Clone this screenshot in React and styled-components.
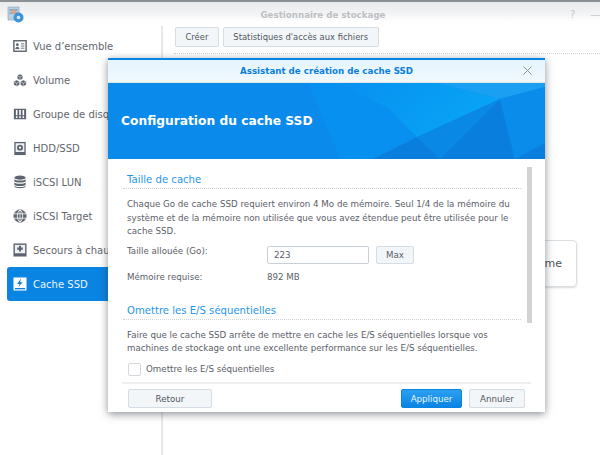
import React from 'react';
import styled, { createGlobalStyle } from 'styled-components';

const Global = createGlobalStyle`
  html, body { margin: 0; padding: 0; background: #fff; }
  body { width: 600px; height: 455px; overflow: hidden; font-family: "DejaVu Sans", sans-serif; }
`;

const OverviewIcon = () => (
  <svg width="16" height="16" viewBox="0 0 16 16">
    <rect x="1" y="2" width="14" height="12" fill="none" stroke="#5b6470" strokeWidth="1.6" />
    <circle cx="5" cy="6.5" r="1.6" fill="#5b6470" />
    <path d="M3 11c0-2 4-2 4 0zM9 5.5h4M9 8h4M9 10.5h4" fill="#5b6470" stroke="#5b6470" />
  </svg>
);
const VolumeIcon = () => (
  <svg width="17" height="17" viewBox="0 0 17 17" fill="#5b6470" stroke="#fff" strokeWidth=".6">
    <path d="M8.500.6l3.400 1.900v3.800L8.500 8.200 5.100 6.300V2.500z" />
    <path d="M4.500 7.800l3.600 2v4l-3.600 2-3.600-2v-4z" />
    <path d="M12.500 7.800l3.600 2v4l-3.600 2-3.600-2v-4z" />
    <path d="M5.100 2.500l3.400 1.900 3.400-1.900M8.500 4.400v3.800M.9 9.800l3.600 2 3.600-2M4.500 11.800v4M8.900 9.800l3.600 2 3.600-2M12.500 11.800v4" fill="none" />
  </svg>
);
const RaidIcon = () => (
  <svg width="16" height="16" viewBox="0 0 16 16">
    <rect x="1" y="2" width="14" height="12" fill="#5b6470" />
    <path d="M4.200 3.500v9M8 3.500v9M11.800 3.500v9" stroke="#fff" strokeWidth="1.800" strokeDasharray="6 1" />
  </svg>
);
const DiskIcon = () => (
  <svg width="16" height="17" viewBox="0 0 16 17">
    <rect x="1.500" y="1" width="13" height="15" fill="#5b6470" />
    <rect x="3" y="2.500" width="10" height="10" fill="#eef0f2" />
    <circle cx="8" cy="7.500" r="3.400" fill="#5b6470" />
    <circle cx="8" cy="7.500" r="1.200" fill="#fff" />
  </svg>
);
const LunIcon = () => (
  <svg width="16" height="16" viewBox="0 0 16 16" fill="#5b6470">
    <ellipse cx="8" cy="3" rx="6.500" ry="2.400" />
    <path d="M1.500 4.800c1 2 12 2 13 0v2.400c-1 2-12 2-13 0zM1.500 8.600c1 2 12 2 13 0V11c-1 2-12 2-13 0zM1.500 12.300c1 2 12 2 13 0v.9c-1 2.500-12 2.500-13 0z" />
  </svg>
);
const TargetIcon = () => (
  <svg width="16" height="16" viewBox="0 0 16 16" fill="none" stroke="#5b6470">
    <circle cx="8" cy="8" r="7" fill="#5b6470" />
    <ellipse cx="8" cy="8" rx="3" ry="6.500" stroke="#fff" strokeWidth=".9" />
    <path d="M8 1v14M1 5.500h14M1 10.500h14" stroke="#fff" strokeWidth=".9" />
  </svg>
);
const SpareIcon = () => (
  <svg width="15" height="16" viewBox="0 0 15 16">
    <rect x=".5" y="1" width="14" height="14" fill="#5b6470" />
    <rect x="2" y="2.500" width="11" height="9" fill="#eef0f2" />
    <path d="M7.500 3.500v6M4.500 6.500h6" stroke="#5b6470" strokeWidth="2.200" />
  </svg>
);
const CacheIcon = () => (
  <svg width="15" height="16" viewBox="0 0 15 16">
    <rect x=".5" y="1" width="14" height="14" fill="#fff" />
    <path d="M8.500 2.200L4.500 8h2.600L5.800 11.500l4.500-5.300H7.700z" fill="#0a7fdc" />
    <rect x="2" y="12.300" width="11" height="1.400" fill="#0a7fdc" />
  </svg>
);

const menu = [
  ['Vue d’ensemble', OverviewIcon],
  ['Volume', VolumeIcon],
  ['Groupe de disques', RaidIcon],
  ['HDD/SSD', DiskIcon],
  ['iSCSI LUN', LunIcon],
  ['iSCSI Target', TargetIcon],
  ['Secours à chaud', SpareIcon],
  ['Cache SSD', CacheIcon],
];

export default function App() {
  return (
    <Page>
      <Global />
      <TitleBar>
        <AppLogo>
          <svg width="17" height="17" viewBox="0 0 17 17">
            <rect x="1" y="1" width="11" height="13" fill="#b9cfe0" stroke="#8aa2b8" strokeWidth=".6" />
            <path d="M2.500 4h8M2.500 7h8" stroke="#6d8296" strokeWidth="1" />
            <circle cx="7" cy="6" r="2.200" fill="#d8a48a" />
            <circle cx="11.500" cy="11.500" r="5" fill="#3f93d8" />
            <circle cx="11.500" cy="11.500" r="1.800" fill="#d4e7f6" />
          </svg>
        </AppLogo>
        <WindowTitle>Gestionnaire de stockage</WindowTitle>
        <WindowActions>
          <span>?</span>
          <span>—</span>
        </WindowActions>
      </TitleBar>
      <Main>
        <Sidebar>
          {menu.map(([label, Icon]) => (
            <MenuItem key={label} $active={label === 'Cache SSD'}>
              <IconSlot><Icon /></IconSlot>
              <span>{label}</span>
            </MenuItem>
          ))}
        </Sidebar>
        <Content>
          <Toolbar>
            <ToolButton>Créer</ToolButton>
            <ToolButton>Statistiques d'accès aux fichiers</ToolButton>
          </Toolbar>
          <BehindCard>Système</BehindCard>
        </Content>
      </Main>

      <Modal>
        <ModalHeader>
          Assistant de création de cache SSD
          <CloseButton>
            <svg width="11" height="11" viewBox="0 0 11 11">
              <path d="M1.500 1.500l8 8M9.500 1.500l-8 8" stroke="#8a9198" strokeWidth="1" />
            </svg>
          </CloseButton>
        </ModalHeader>
        <Banner>
          <BannerArt viewBox="0 0 437 76" preserveAspectRatio="none">
            <defs>
              <linearGradient id="glow" x1="0" y1="0" x2="1" y2="0.400">
                <stop offset="0" stopColor="#0790f0" />
                <stop offset="1" stopColor="#08a4f6" />
              </linearGradient>
            </defs>
            <path d="M0 0h437v76H0z" fill="#0790f0" />
            <path d="M0 0h200l32 76H0z" fill="#0a8aeb" />
            <path d="M230 0h99l63 16-83 38-29-29z" fill="url(#glow)" />
            <path d="M329 0h108v4l-45 12z" fill="#1a9ff2" />
            <path d="M265 76l44-22 23 22z" fill="#0a7edd" />
            <path d="M309 54l83-38-60 60z" fill="#0a88e6" />
            <path d="M392 16l15 60h-75z" fill="#0a7edd" />
            <path d="M392 16l45-12v56l-30 16z" fill="#0a8cea" />
            <path d="M407 76l30-16v16z" fill="#0a7edd" />
          </BannerArt>
          <BannerTitle>Configuration du cache SSD</BannerTitle>
        </Banner>
        <ModalBody>
          <SectionTitle>Taille de cache</SectionTitle>
          <Paragraph>
            Chaque Go de cache SSD requiert environ 4 Mo de mémoire. Seul 1/4 de la mémoire du
            système et de la mémoire non utilisée que vous avez étendue peut être utilisée pour le
            cache SSD.
          </Paragraph>
          <FieldRow>
            <FieldLabel>Taille allouée (Go):</FieldLabel>
            <ValueBox>223</ValueBox>
            <MaxButton>Max</MaxButton>
          </FieldRow>
          <InfoRow>
            <FieldLabel>Mémoire requise:</FieldLabel>
            <span>892 MB</span>
          </InfoRow>
          <SectionTitle $second>Omettre les E/S séquentielles</SectionTitle>
          <Paragraph>
            Faire que le cache SSD arrête de mettre en cache les E/S séquentielles lorsque vos
            machines de stockage ont une excellente performance sur les E/S séquentielles.
          </Paragraph>
          <CheckRow>
            <CheckBox />
            <span>Omettre les E/S séquentielles</span>
          </CheckRow>
          <ScrollThumb />
        </ModalBody>
        <ModalFooter>
          <FooterButton $width={84}>Retour</FooterButton>
          <FooterRight>
            <FooterButton $primary $width={61}>Appliquer</FooterButton>
            <FooterButton $width={56}>Annuler</FooterButton>
          </FooterRight>
        </ModalFooter>
      </Modal>
    </Page>
  );
}

const Page = styled.div`
  position: relative;
  width: 600px;
  height: 455px;
  display: flex;
  flex-direction: column;
  color: #5a6068;
  font-size: 8.700px;
  overflow: hidden;
`;

const TitleBar = styled.div`
  height: 20px;
  border-top: 2px solid #8c9196;
  background: linear-gradient(#e9eaeb, #f2f3f4 55%, #fff);
  display: flex;
  align-items: center;
  position: relative;
  padding-left: 7px;
`;

const AppLogo = styled.div`
  display: flex;
  margin-top: 5px;
`;

const WindowTitle = styled.div`
  flex: 1;
  text-align: center;
  font-size: 8.700px;
  font-weight: 700;
  color: #bcc0c4;
  margin-top: 6px;
  padding-left: 52px;
`;

const WindowActions = styled.div`
  display: flex;
  gap: 15px;
  margin-top: 5px;
  color: #c6c9cc;
  font-size: 10px;
  width: 30px;
  overflow: hidden;
`;

const Main = styled.div`
  flex: 1;
  display: flex;
  min-height: 0;
`;

const Sidebar = styled.nav`
  width: 163px;
  flex: none;
  box-sizing: border-box;
  border-right: 2px solid #e6e8ea;
  padding: 3px 0 0 7px;
  margin-top: 4px;
  display: flex;
  flex-direction: column;
`;

const MenuItem = styled.div`
  height: 34px;
  display: flex;
  align-items: center;
  gap: 6px;
  padding-left: 6px;
  margin-right: 1px;
  border-radius: 3px;
  font-size: 10px;
  color: ${(p) => (p.$active ? '#eaf5fe' : '#5f666e')};
  background: ${(p) => (p.$active ? '#0a84e2' : 'transparent')};
`;

const IconSlot = styled.span`
  width: 14px;
  display: flex;
  justify-content: center;
`;

const Content = styled.div`
  flex: 1;
  min-width: 0;
  padding: 5px 0 0 11px;
`;

const Toolbar = styled.div`
  display: flex;
  gap: 4px;
  padding: 0 0 6px 1px;
  border-bottom: 1px dotted #cfd3d6;
`;

const ToolButton = styled.div`
  height: 18px;
  padding: 0 9.500px;
  display: flex;
  align-items: center;
  border: 1px solid #d4dde5;
  border-radius: 2px;
  background: #f3f6f9;
  font-size: 8.400px;
  color: #50565e;
`;

const BehindCard = styled.div`
  width: 200px;
  height: 47px;
  margin: 186px 0 0 203px;
  box-sizing: border-box;
  border: 1px solid #dcdfe2;
  border-radius: 4px;
  box-shadow: 0 1px 2px rgba(0, 0, 0, 0.15);
  display: flex;
  align-items: center;
  justify-content: flex-end;
  padding-right: 14px;
  font-size: 11px;
  color: #4d5359;
`;

const Modal = styled.div`
  position: absolute;
  left: 108px;
  top: 58px;
  width: 437px;
  height: 354px;
  background: #fff;
  border-top: 2px solid #0a84e2;
  box-sizing: border-box;
  box-shadow: 0 2px 8px rgba(40, 50, 60, 0.55);
  display: flex;
  flex-direction: column;
`;

const ModalHeader = styled.div`
  height: 23px;
  flex: none;
  box-sizing: border-box;
  position: relative;
  display: flex;
  align-items: center;
  justify-content: center;
  background: linear-gradient(#e4f4fd, #f1f9fe);
  border-bottom: 1px solid #dfe6ea;
  font-size: 8.700px;
  font-weight: 700;
  color: #0a7edb;
`;

const CloseButton = styled.span`
  position: absolute;
  right: 12px;
  top: 5px;
  display: flex;
`;

const Banner = styled.div`
  height: 76px;
  flex: none;
  position: relative;
  display: flex;
  align-items: center;
  padding-left: 13px;
`;

const BannerArt = styled.svg`
  position: absolute;
  inset: 0;
  width: 100%;
  height: 100%;
`;

const BannerTitle = styled.div`
  position: relative;
  font-weight: 700;
  font-size: 12.250px;
  color: #fff;
`;

const ModalBody = styled.div`
  flex: 1;
  min-height: 0;
  position: relative;
  padding: 13px 14px 0 19px;
  margin-right: 14px;
`;

const SectionTitle = styled.div`
  font-size: 10.100px;
  line-height: 15px;
  color: #1f95ea;
  padding-bottom: 1px;
  margin-top: ${(p) => (p.$second ? '21px' : '0')};
  border-bottom: 1px dotted #cfd3d6;
  margin-left: -4px;
  padding-left: 4px;
  margin-right: -4px;
`;

const Paragraph = styled.div`
  margin-top: 9px;
  line-height: 13.500px;
`;

const FieldRow = styled.div`
  display: flex;
  align-items: flex-start;
  margin-top: 7px;
`;

const FieldLabel = styled.span`
  width: 140px;
  flex: none;
`;

const ValueBox = styled.div`
  width: 102px;
  height: 18px;
  box-sizing: border-box;
  border: 1px solid #c9d0d6;
  padding-left: 6px;
  display: flex;
  align-items: center;
  border-radius: 2px;
`;

const MaxButton = styled.div`
  margin-left: 7px;
  width: 38px;
  height: 18px;
  box-sizing: border-box;
  display: flex;
  align-items: center;
  justify-content: center;
  background: #f3f6f9;
  border: 1px solid #d4dde5;
  border-radius: 2px;
`;

const InfoRow = styled.div`
  display: flex;
  margin-top: 8px;
`;

const CheckRow = styled.div`
  display: flex;
  align-items: center;
  gap: 5px;
  margin: 7px 0 0 1px;
`;

const CheckBox = styled.span`
  width: 13px;
  height: 13px;
  box-sizing: border-box;
  border: 1px solid #d4d8dc;
  border-radius: 2px;
`;

const ScrollThumb = styled.div`
  position: absolute;
  right: -1px;
  top: 8px;
  width: 5px;
  height: 156px;
  background: #d2d2d2;
`;

const ModalFooter = styled.div`
  flex: none;
  height: 30px;
  box-sizing: border-box;
  margin: 0 14px;
  padding: 5px 6px 0;
  border-top: 2px solid #eceef0;
  display: flex;
  justify-content: space-between;
`;

const FooterRight = styled.div`
  display: flex;
  gap: 7px;
`;

const FooterButton = styled.div`
  width: ${(p) => p.$width}px;
  height: 19px;
  box-sizing: border-box;
  display: flex;
  align-items: center;
  justify-content: center;
  border-radius: 2px;
  border: 1px solid ${(p) => (p.$primary ? '#0a84e2' : '#d4dde5')};
  background: ${(p) => (p.$primary ? 'linear-gradient(#2ba0f2, #0a84e2)' : '#f3f6f9')};
  color: ${(p) => (p.$primary ? '#eaf5fe' : '#50565e')};
`;
